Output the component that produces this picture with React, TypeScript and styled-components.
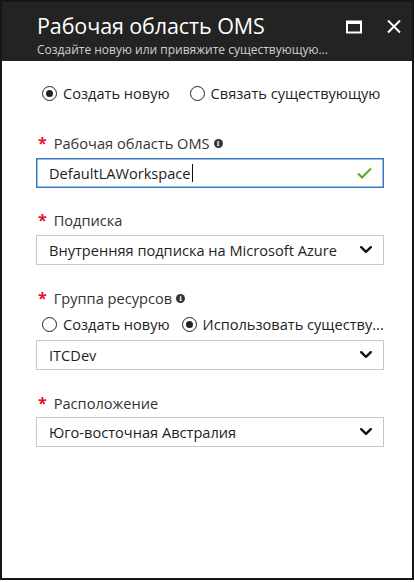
import React from "react";
import styled, { createGlobalStyle } from "styled-components";

const Global = createGlobalStyle`
  html, body { margin: 0; padding: 0; background: #fff; }
  body { font-family: "Open Sans", "Noto Sans", sans-serif; color: #1e1e1e; }
  * { box-sizing: border-box; }
`;

const Frame = styled.div`
  width: 414px;
  height: 580px;
  border: 2px solid #161616;
  display: flex;
  flex-direction: column;
  background: #fff;
`;

const Header = styled.header`
  height: 59px;
  background: #232323;
  display: flex;
  align-items: flex-start;
  padding: 10px 10px 0 35px;
  color: #fff;
`;

const Titles = styled.div`
  flex: 1;
  min-width: 0;
`;

const Title = styled.h1`
  margin: 0;
  font-weight: 400;
  font-size: 21.5px;
  line-height: 28px;
  letter-spacing: -0.1px;
`;

const Subtitle = styled.div`
  font-size: 12px;
  line-height: 16px;
  color: #d0d0d0;
  margin-top: 2px;
  white-space: nowrap;
`;

const HeaderButtons = styled.div`
  display: flex;
  gap: 24px;
  padding-top: 5px;
`;

const IconBtn = styled.span`
  display: block;
  width: 16px;
  height: 14px;
`;

const Body = styled.div`
  flex: 1;
  padding: 22px 28px 0 34px;
  display: flex;
  flex-direction: column;
`;

const RadioRow = styled.div<{ $top: number; $gap: number }>`
  display: flex;
  align-items: center;
  gap: ${(p) => p.$gap}px;
  margin-top: ${(p) => p.$top}px;
  padding-left: 6px;
  height: 20px;
  white-space: nowrap;
`;

const RadioLabel = styled.label`
  display: flex;
  align-items: center;
  gap: 6px;
  font-size: 14.6px;
  line-height: 20px;
  color: #222;
  white-space: nowrap;
`;

const RadioCircle = styled.span<{ $on?: boolean }>`
  flex: none;
  width: 15px;
  height: 15px;
  border-radius: 50%;
  border: 1.6px solid #222;
  display: flex;
  align-items: center;
  justify-content: center;
  &::after {
    content: "";
    width: 7px;
    height: 7px;
    border-radius: 50%;
    background: #222;
    display: ${(p) => (p.$on ? "block" : "none")};
  }
`;

const FieldLabel = styled.div<{ $top: number }>`
  margin-top: ${(p) => p.$top}px;
  display: flex;
  align-items: center;
  font-size: 14.6px;
  line-height: 20px;
  color: #333;
  padding-left: 2px;
`;

const Star = styled.span`
  color: #e81123;
  font-size: 16px;
  font-weight: 700;
  margin-right: 7px;
`;

const Info = styled.span`
  display: inline-flex;
  width: 9px;
  height: 9px;
  border-radius: 50%;
  background: #333;
  color: #fff;
  font-size: 7px;
  font-weight: 700;
  line-height: 9px;
  justify-content: center;
  margin-left: 4px;
  font-family: "DejaVu Serif", serif;
`;

const Box = styled.div<{ $top: number; $focus?: boolean }>`
  margin-top: ${(p) => p.$top}px;
  height: 30px;
  border: 1px solid ${(p) => (p.$focus ? "#3a78c9" : "#c8c8c8")};
  ${(p) => (p.$focus ? "box-shadow: inset 0 0 0 0.5px #3a78c9;" : "")}
  display: flex;
  align-items: center;
  padding: 0 11px 0 12px;
  font-size: 14.6px;
  color: #1e1e1e;
  background: #fff;
`;

const BoxText = styled.span`
  flex: 1;
  white-space: nowrap;
  display: flex;
  align-items: center;
`;

const Caret = styled.span`
  display: inline-block;
  width: 1px;
  height: 18px;
  background: #111;
  margin-left: 1px;
`;

const Chevron = () => (
  <svg width="12" height="8" viewBox="0 0 12 8">
    <path d="M1.2 1.2 L6 5.8 L10.8 1.2" fill="none" stroke="#111" strokeWidth="2.4" strokeLinecap="round" strokeLinejoin="round" />
  </svg>
);

const Check = () => (
  <svg width="15" height="12" viewBox="0 0 15 12">
    <path d="M1 6.5 L5 10.5 L14 1.5" fill="none" stroke="#5ea715" strokeWidth="2" />
  </svg>
);

export default function App() {
  return (
    <>
      <Global />
      <Frame>
        <Header>
          <Titles>
            <Title>Рабочая область OMS</Title>
            <Subtitle>Создайте новую или привяжите существующую...</Subtitle>
          </Titles>
          <HeaderButtons>
            <IconBtn>
              <svg width="16" height="14" viewBox="0 0 16 14">
                <rect x="1" y="1.5" width="14" height="11" fill="none" stroke="#fff" strokeWidth="2" />
                <rect x="1" y="1" width="14" height="3" fill="#fff" />
              </svg>
            </IconBtn>
            <IconBtn>
              <svg width="16" height="14" viewBox="0 0 16 14">
                <path d="M2 0.5 L14 12.5 M14 0.5 L2 12.5" stroke="#fff" strokeWidth="2" />
              </svg>
            </IconBtn>
          </HeaderButtons>
        </Header>
        <Body>
          <RadioRow $top={0} $gap={20}>
            <RadioLabel>
              <RadioCircle $on />
              Создать новую
            </RadioLabel>
            <RadioLabel>
              <RadioCircle />
              Связать существующую
            </RadioLabel>
          </RadioRow>

          <FieldLabel $top={30}>
            <Star>*</Star>Рабочая область OMS<Info>i</Info>
          </FieldLabel>
          <Box $top={5} $focus>
            <BoxText>
              DefaultLAWorkspace
              <Caret />
            </BoxText>
            <Check />
          </Box>

          <FieldLabel $top={22}>
            <Star>*</Star>Подписка
          </FieldLabel>
          <Box $top={5}>
            <BoxText>Внутренняя подписка на Microsoft Azure</BoxText>
            <Chevron />
          </Box>

          <FieldLabel $top={23}>
            <Star>*</Star>Группа ресурсов<Info>i</Info>
          </FieldLabel>
          <RadioRow $top={6} $gap={12}>
            <RadioLabel>
              <RadioCircle />
              Создать новую
            </RadioLabel>
            <RadioLabel>
              <RadioCircle $on />
              Использовать существу...
            </RadioLabel>
          </RadioRow>
          <Box $top={6}>
            <BoxText>ITCDev</BoxText>
            <Chevron />
          </Box>

          <FieldLabel $top={23}>
            <Star>*</Star>Расположение
          </FieldLabel>
          <Box $top={4}>
            <BoxText>Юго-восточная Австралия</BoxText>
            <Chevron />
          </Box>
        </Body>
      </Frame>
    </>
  );
}
